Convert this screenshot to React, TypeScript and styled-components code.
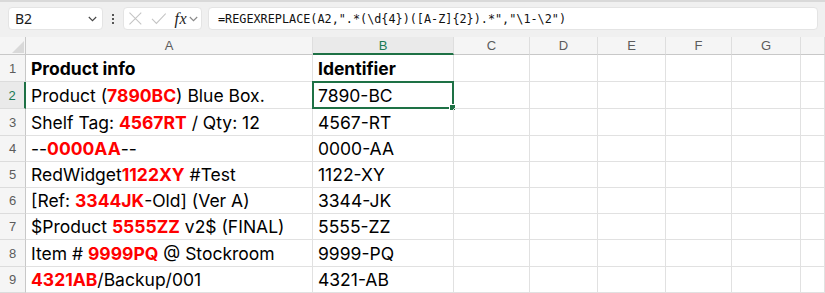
import React from "react";
import styled, { createGlobalStyle } from "styled-components";

const Global = createGlobalStyle`
  html, body { margin: 0; padding: 0; background: #ffffff; }
  body { font-family: "Liberation Sans", Arial, sans-serif; overflow: hidden; }
`;

const Page = styled.div`
  width: 825px;
  height: 293px;
  overflow: hidden;
  display: flex;
  flex-direction: column;
  background: #ffffff;
`;

const Toolbar = styled.div`
  height: 37px;
  flex: none;
  box-sizing: border-box;
  border-top: 2px solid #d9d9d9;
  background: #f0f0f0;
  display: flex;
  align-items: flex-start;
  padding: 5px 7px 0 8px;
`;

const Box = styled.div`
  height: 23px;
  box-sizing: border-box;
  background: #ffffff;
  border: 1px solid #e4e4e4;
  border-radius: 4px;
  display: flex;
  align-items: center;
`;

const NameBox = styled(Box)`
  width: 95px;
  padding: 0 5px 0 6px;
  justify-content: space-between;
  font-family: "Noto Sans", "Liberation Sans", sans-serif;
  font-size: 14px;
  color: #1a1a1a;
`;

const Dots = styled.div`
  width: 2px;
  height: 23px;
  margin: 0 9px;
  display: flex;
  flex-direction: column;
  justify-content: center;
  gap: 2px;
  & > span {
    display: block;
    width: 2px;
    height: 2px;
    background: #555;
  }
`;

const FuncBox = styled(Box)`
  width: 79px;
  padding: 0 3px 0 4px;
  gap: 0;
`;

const Fx = styled.span`
  font-family: "Liberation Serif", "DejaVu Serif", serif;
  font-style: italic;
  font-size: 16px;
  color: #222;
  margin-left: 8px;
  letter-spacing: 0.5px;
`;

const FxChevron = styled.span`
  margin-left: 2px;
  display: flex;
`;

const FormulaBox = styled(Box)`
  flex: 1;
  margin-left: 6px;
  padding-left: 9px;
  font-family: "DejaVu Sans Mono", "Liberation Mono", monospace;
  font-size: 11.8px;
  color: #111;
  white-space: pre;
`;

const Grid = styled.div`
  display: flex;
  flex-direction: column;
`;

const COLS = "26px 287px 141px 76px 68px 68px 66px 69px 1fr";

const HeaderRow = styled.div`
  display: grid;
  grid-template-columns: ${COLS};
  height: 18px;
  background: #f5f5f5;
`;

const Corner = styled.div`
  position: relative;
  border-right: 1px solid #c8c8c8;
  border-bottom: 1px solid #c8c8c8;
  &::after {
    content: "";
    position: absolute;
    right: 1px;
    bottom: 1px;
    width: 0;
    height: 0;
    border-left: 12px solid transparent;
    border-bottom: 12px solid #d9d9d9;
  }
`;

const ColHead = styled.div<{ $active?: boolean }>`
  display: flex;
  align-items: center;
  justify-content: center;
  font-family: "Liberation Sans", Arial, sans-serif;
  font-size: 13px;
  color: ${(p) => (p.$active ? "#1a7a55" : "#5c5c5c")};
  background: ${(p) => (p.$active ? "#eaeaea" : "transparent")};
  border-right: 1px solid #dedede;
  border-bottom: ${(p) => (p.$active ? "2px solid #1e7145" : "1px solid #c8c8c8")};
  box-sizing: border-box;
  padding-top: ${(p) => (p.$active ? "1px" : "0")};
`;

const Row = styled.div<{ $h: number }>`
  display: grid;
  grid-template-columns: ${COLS};
  height: ${(p) => p.$h}px;
`;

const RowHead = styled.div<{ $active?: boolean }>`
  display: flex;
  align-items: center;
  justify-content: center;
  font-family: "Liberation Sans", Arial, sans-serif;
  font-size: 13px;
  color: ${(p) => (p.$active ? "#1a7a55" : "#5c5c5c")};
  background: ${(p) => (p.$active ? "#eaeaea" : "#f5f5f5")};
  border-right: ${(p) => (p.$active ? "2px solid #1e7145" : "1px solid #c8c8c8")};
  border-bottom: 1px solid #dcdcdc;
  box-sizing: border-box;
`;

const Cell = styled.div<{ $bold?: boolean; $selected?: boolean }>`
  position: relative;
  display: flex;
  align-items: center;
  padding-left: 5px;
  box-sizing: border-box;
  border-right: 1px solid #e1e1e1;
  border-bottom: 1px solid #e1e1e1;
  font-family: "Inter", "Liberation Sans", sans-serif;
  font-size: 17.5px;
  font-weight: ${(p) => (p.$bold ? 700 : 400)};
  color: #000;
  white-space: pre;
  ${(p) =>
    p.$selected &&
    `
    &::before {
      content: "";
      position: absolute;
      left: -1px;
      top: -1px;
      right: -1px;
      bottom: -1px;
      border: 2px solid #1e7145;
      pointer-events: none;
    }
    &::after {
      content: "";
      position: absolute;
      right: -3px;
      bottom: -3px;
      width: 5px;
      height: 5px;
      background: #1e7145;
      border: 1px solid #ffffff;
      box-sizing: content-box;
    }
  `}
`;

const CellText = styled.span`
  white-space: pre;
`;

const Red = styled.span`
  color: #ff0000;
  font-weight: 700;
`;

type Part = string | { r: string };

const data: { a: Part[]; b: string; h: number }[] = [
  { a: ["Product (", { r: "7890BC" }, ") Blue Box."], b: "7890-BC", h: 27 },
  { a: ["Shelf Tag: ", { r: "4567RT" }, " / Qty: 12"], b: "4567-RT", h: 27 },
  { a: ["--", { r: "0000AA" }, "--"], b: "0000-AA", h: 26 },
  { a: ["RedWidget", { r: "1122XY" }, " #Test"], b: "1122-XY", h: 26 },
  { a: ["[Ref: ", { r: "3344JK" }, "-Old] (Ver A)"], b: "3344-JK", h: 26 },
  { a: ["$Product ", { r: "5555ZZ" }, " v2$ (FINAL)"], b: "5555-ZZ", h: 26 },
  { a: ["Item # ", { r: "9999PQ" }, " @ Stockroom"], b: "9999-PQ", h: 27 },
  { a: [{ r: "4321AB" }, "/Backup/001"], b: "4321-AB", h: 26 },
];

const cols = ["A", "B", "C", "D", "E", "F", "G", ""];

const Chevron = ({ color = "#555" }: { color?: string }) => (
  <svg width="9" height="6" viewBox="0 0 9 6">
    <path d="M0.8 1 L4.5 4.7 L8.2 1" fill="none" stroke={color} strokeWidth="1.1" />
  </svg>
);

const Cross = () => (
  <svg width="15" height="15" viewBox="0 0 15 15">
    <path d="M1.5 1.5 L13.5 13.5 M13.5 1.5 L1.5 13.5" stroke="#c4c4c4" strokeWidth="1.1" fill="none" />
  </svg>
);

const Check = () => (
  <svg width="16" height="15" viewBox="0 0 16 15" style={{ marginLeft: 8 }}>
    <path d="M1 8 L5.5 12.5 L15 2.5" stroke="#c4c4c4" strokeWidth="1.1" fill="none" />
  </svg>
);

export default function App() {
  return (
    <Page>
      <Global />
      <Toolbar>
        <NameBox>
          <span>B2</span>
          <Chevron color="#444" />
        </NameBox>
        <Dots>
          <span />
          <span />
          <span />
        </Dots>
        <FuncBox>
          <Cross />
          <Check />
          <Fx>fx</Fx>
          <FxChevron>
            <Chevron color="#888" />
          </FxChevron>
        </FuncBox>
        <FormulaBox>{'=REGEXREPLACE(A2,".*(\\d{4})([A-Z]{2}).*","\\1-\\2")'}</FormulaBox>
      </Toolbar>
      <Grid>
        <HeaderRow>
          <Corner />
          {cols.map((c, i) => (
            <ColHead key={i} $active={c === "B"}>
              {c}
            </ColHead>
          ))}
        </HeaderRow>
        <Row $h={27}>
          <RowHead>1</RowHead>
          <Cell $bold>
            <CellText>Product info</CellText>
          </Cell>
          <Cell $bold>
            <CellText>Identifier</CellText>
          </Cell>
          {cols.slice(2).map((_, i) => (
            <Cell key={i} />
          ))}
        </Row>
        {data.map((r, i) => (
          <Row key={i} $h={r.h}>
            <RowHead $active={i === 0}>{i + 2}</RowHead>
            <Cell>
              <CellText>
                {r.a.map((p, j) => (typeof p === "string" ? p : <Red key={j}>{p.r}</Red>))}
              </CellText>
            </Cell>
            <Cell $selected={i === 0}>
              <CellText>{r.b}</CellText>
            </Cell>
            {cols.slice(2).map((_, k) => (
              <Cell key={k} />
            ))}
          </Row>
        ))}
      </Grid>
    </Page>
  );
}
